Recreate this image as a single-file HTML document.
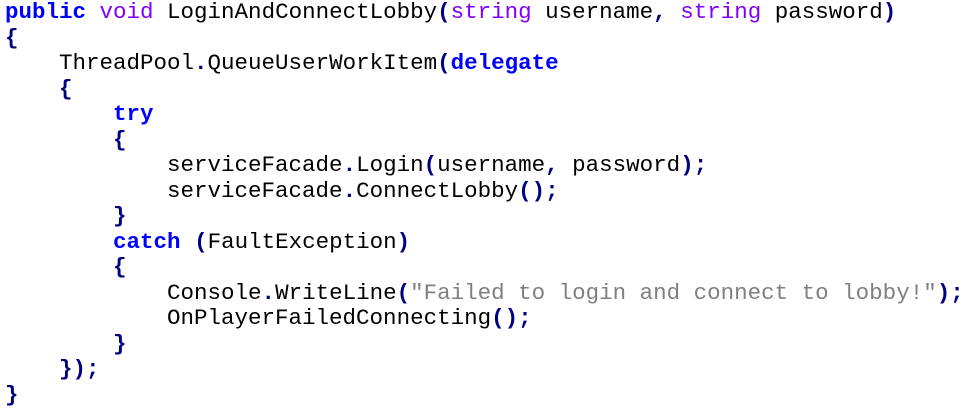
<!DOCTYPE html>
<html><head><meta charset="utf-8"><style>
html,body{margin:0;padding:0;background:#fff;width:972px;height:417px;overflow:hidden}
pre{margin:0;padding:0 0 0 5px;font-family:"Courier New","Nimbus Mono PS","Liberation Mono",monospace;font-size:22.5px;line-height:25.5px;color:#000}
.k{color:#0000ff;font-weight:bold}
.t{color:#8000ff}
.p{color:#000080;font-weight:bold}
.s{color:#808080}
</style></head><body><pre><span class="k">public</span> <span class="t">void</span> LoginAndConnectLobby<span class="p">(</span><span class="t">string</span> username<span class="p">,</span> <span class="t">string</span> password<span class="p">)</span>
<span class="p">{</span>
    ThreadPool<span class="p">.</span>QueueUserWorkItem<span class="p">(</span><span class="k">delegate</span>
    <span class="p">{</span>
        <span class="k">try</span>
        <span class="p">{</span>
            serviceFacade<span class="p">.</span>Login<span class="p">(</span>username<span class="p">,</span> password<span class="p">);</span>
            serviceFacade<span class="p">.</span>ConnectLobby<span class="p">();</span>
        <span class="p">}</span>
        <span class="k">catch</span> <span class="p">(</span>FaultException<span class="p">)</span>
        <span class="p">{</span>
            Console<span class="p">.</span>WriteLine<span class="p">(</span><span class="s">"Failed to login and connect to lobby!"</span><span class="p">);</span>
            OnPlayerFailedConnecting<span class="p">();</span>
        <span class="p">}</span>
    <span class="p">});</span>
<span class="p">}</span></pre></body></html>
